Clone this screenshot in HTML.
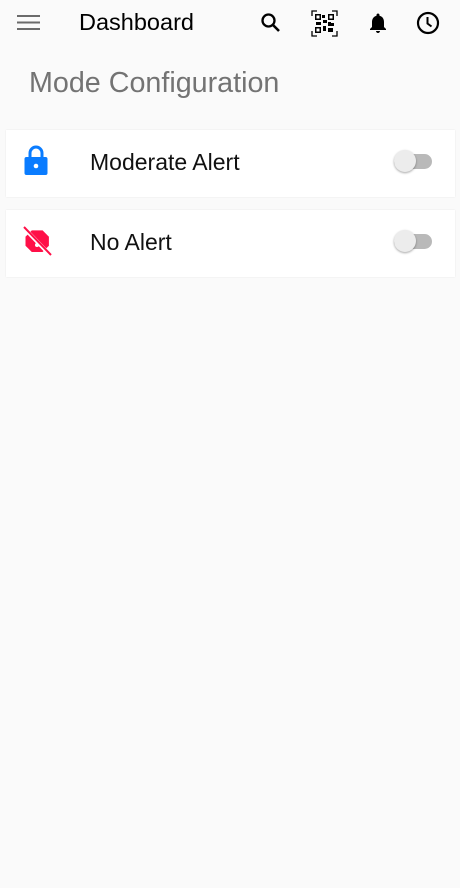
<!DOCTYPE html>
<html><head><meta charset="utf-8"><style>
body{margin:0;width:460px;height:888px;background:#fafafa;font-family:"Liberation Sans",Roboto,sans-serif;position:relative;overflow:hidden}
.a{position:absolute}
.card{position:absolute;left:6px;width:449px;height:67px;background:#fff;box-shadow:0 0 1px rgba(0,0,0,.12)}
.lbl{position:absolute;left:84px;top:19px;font-size:23px;color:#111}
.track{position:absolute;left:388px;top:24px;width:38px;height:15px;border-radius:8px;background:#b9b9b9}
.thumb{position:absolute;left:388px;top:20px;width:22px;height:22px;border-radius:50%;background:#ececec;box-shadow:0 1px 2px rgba(0,0,0,.35)}
</style></head><body>
<svg class="a" style="left:17px;top:14px" width="24" height="18" viewBox="0 0 24 18"><path d="M0 2h23M0 8.5h23M0 15h23" stroke="#6b6b6b" stroke-width="2"/></svg>
<div class="a" style="left:79px;top:9px;font-size:23.5px;color:#000">Dashboard</div>
<svg class="a" style="left:259px;top:11px" width="24" height="24" viewBox="0 0 24 24"><circle cx="9.5" cy="9.5" r="6" fill="none" stroke="#000" stroke-width="2.3"/><path d="M14 14l6 6" stroke="#000" stroke-width="2.6"/></svg>
<svg class="a" style="left:311px;top:10px" width="27" height="27" viewBox="0 0 27 27"><path d="M1 6V1h5M21 1h5v5M26 21v5h-5M6 26H1v-5" fill="none" stroke="#000" stroke-width="1.3"/><g fill="#000"><rect x="4" y="4" width="6" height="6"/><rect x="17" y="4" width="6" height="6"/><rect x="4" y="17" width="6" height="6"/><rect x="11" y="5" width="3" height="3"/><rect x="12" y="10" width="4" height="3"/><rect x="5" y="12" width="5" height="3"/><rect x="17" y="12" width="3" height="4"/><rect x="12" y="16" width="3" height="5"/><rect x="17" y="18" width="5" height="4"/><rect x="20" y="13" width="3" height="3"/></g><g fill="#fff"><rect x="5.5" y="5.5" width="3" height="3"/><rect x="18.5" y="5.5" width="3" height="3"/><rect x="5.5" y="18.5" width="3" height="3"/></g></svg>
<svg class="a" style="left:366px;top:11px" width="24" height="24" viewBox="0 0 24 24"><path d="M12 22c1.1 0 2-.9 2-2h-4c0 1.1.9 2 2 2zm6-6v-5c0-3.1-1.6-5.6-4.5-6.3V4c0-.8-.7-1.5-1.5-1.5s-1.5.7-1.5 1.5v.7C7.6 5.4 6 7.9 6 11v5l-2 2v1h16v-1l-2-2z"/></svg>
<svg class="a" style="left:415px;top:10px" width="26" height="26" viewBox="0 0 26 26"><circle cx="13" cy="13" r="10" fill="none" stroke="#000" stroke-width="2.2"/><path d="M12.5 7v6.5l4 3" fill="none" stroke="#000" stroke-width="2"/></svg>
<div class="a" style="left:29px;top:67px;font-size:28.7px;color:#737373">Mode Configuration</div>
<div class="card" style="top:130px">
<svg class="a" style="left:17px;top:14px" width="26" height="32" viewBox="0 0 26 32"><path d="M7 14V9a6 6 0 0 1 12 0v5" fill="none" stroke="#0a7cff" stroke-width="3"/><rect x="1.5" y="13" width="23" height="18" rx="2" fill="#0a7cff"/><circle cx="13" cy="22" r="2.3" fill="#fff"/></svg>
<div class="lbl">Moderate Alert</div><div class="track"></div><div class="thumb"></div></div>
<div class="card" style="top:210px">
<svg class="a" style="left:15px;top:15px" width="32" height="32" viewBox="0 0 32 32"><path d="M10 4h12l7 7v10l-7 7H10l-7-7V11z" fill="#ff1048" transform="scale(.9) translate(2,2)"/><circle cx="16" cy="20" r="2" fill="#fff"/><path d="M3 3l26 27" stroke="#fff" stroke-width="4"/><path d="M3 2l27 28" stroke="#ff1048" stroke-width="2"/></svg>
<div class="lbl">No Alert</div><div class="track"></div><div class="thumb"></div></div>
</body></html>
